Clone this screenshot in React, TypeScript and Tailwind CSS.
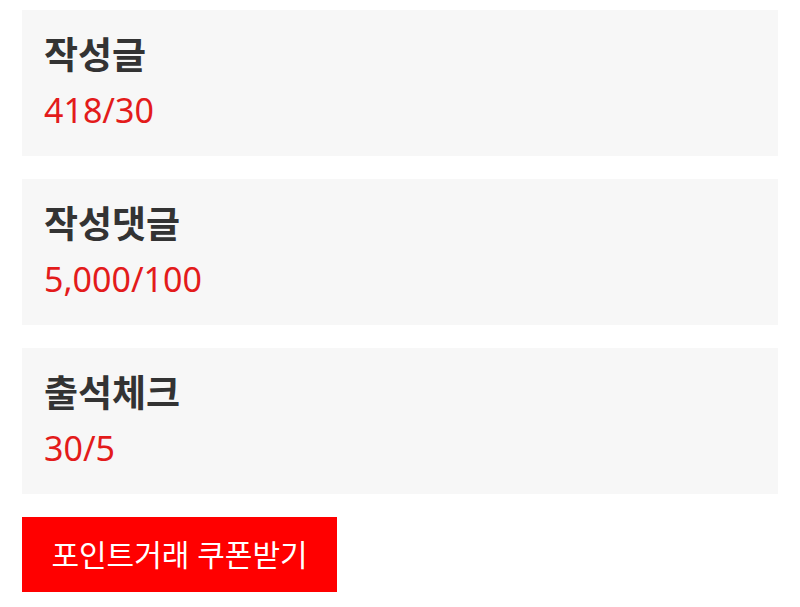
const stats = [
    { label: '작성글', value: '418/30' },
    { label: '작성댓글', value: '5,000/100' },
    { label: '출석체크', value: '30/5' },
];

export default function App() {
    return (
        <div
            className="min-h-[607px] bg-white px-[22px] pt-[10px]"
            style={{ fontFamily: '"Noto Sans", "Noto Sans CJK KR", sans-serif' }}
        >
            <div className="flex flex-col gap-[23px]">
                {stats.map((stat) => (
                    <div
                        key={stat.label}
                        className="flex h-[146px] flex-col justify-center bg-[#f7f7f7] px-[22px]"
                    >
                        <h3 className="text-[37px] font-bold leading-[52px] text-[#333333]">
                            {stat.label}
                        </h3>
                        <p className="pt-[2px] text-[34px] leading-[54px] text-[#e31b1b]">
                            {stat.value}
                        </p>
                    </div>
                ))}
            </div>

            <button
                type="button"
                className="mt-[23px] h-[75px] w-[315px] bg-[#ff0000] text-[30px] text-white"
            >
                포인트거래 쿠폰받기
            </button>
        </div>
    );
}
